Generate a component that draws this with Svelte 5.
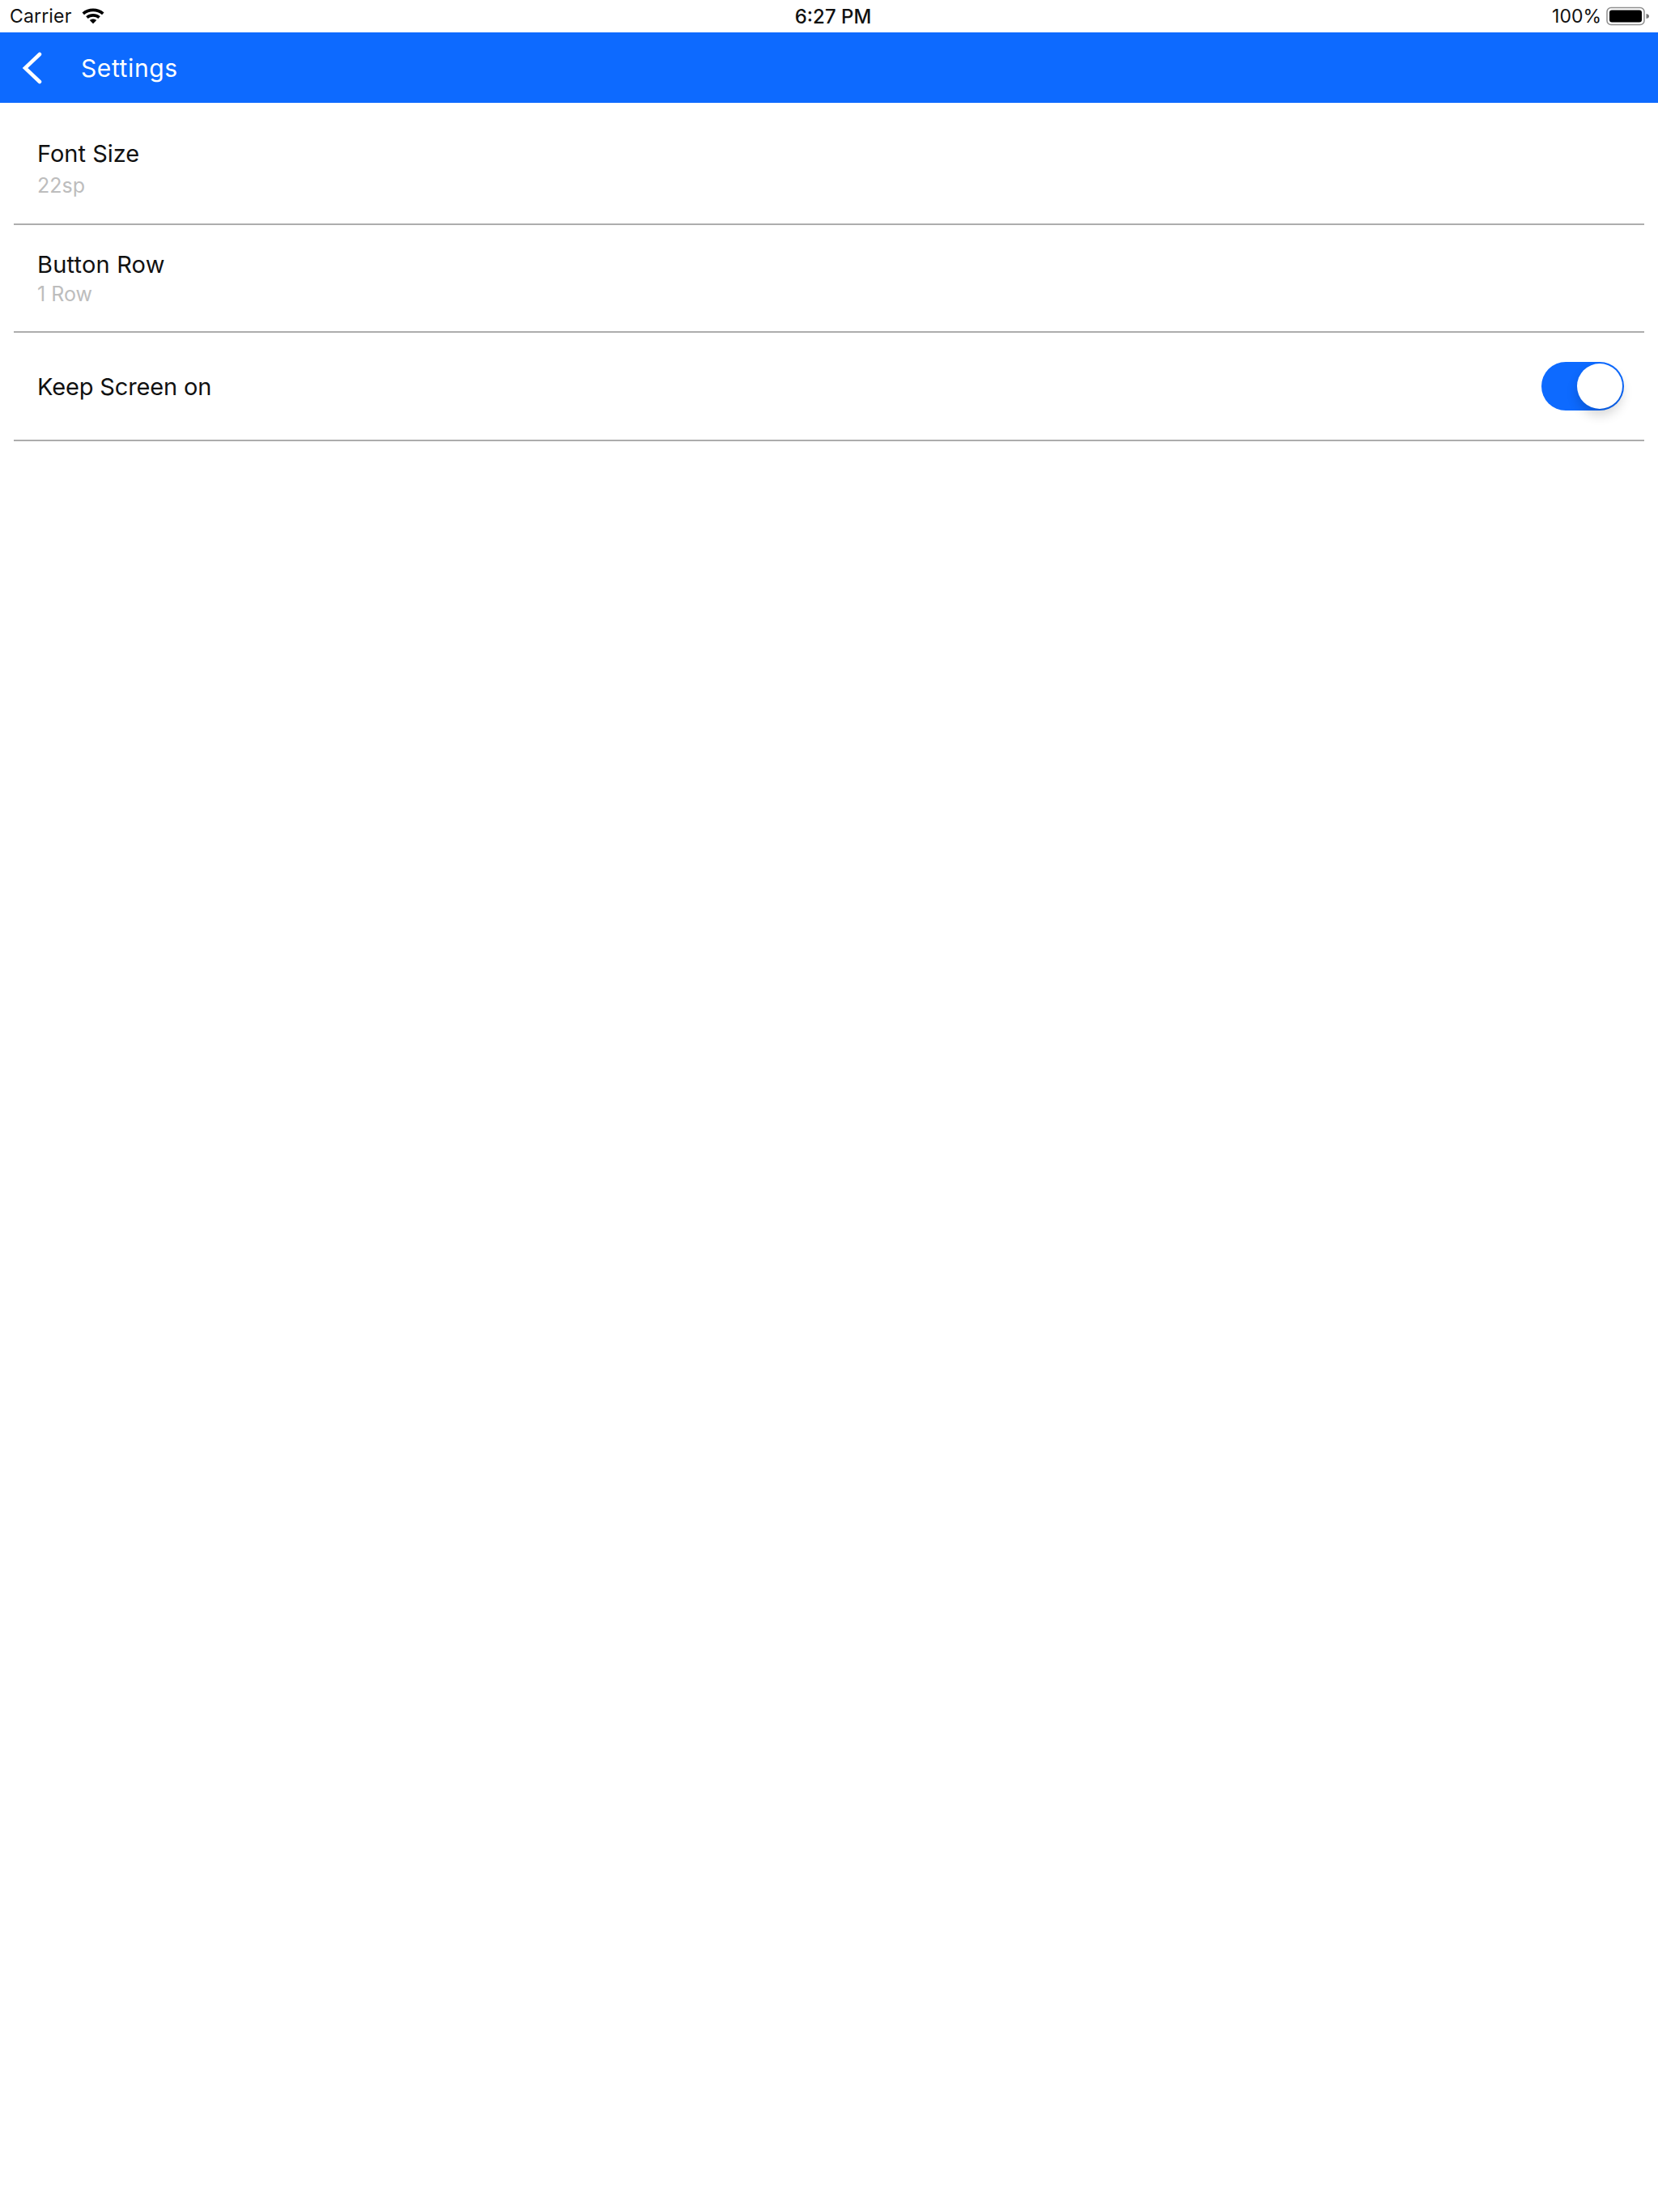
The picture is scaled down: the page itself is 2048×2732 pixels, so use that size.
<script>
  const rows = [
    { title: 'Font Size', sub: '22sp', cls: 'a' },
    { title: 'Button Row', sub: '1 Row', cls: 'b' },
    { title: 'Keep Screen on', toggle: true, cls: 'c' }
  ];
</script>

<div class="page">
  <div class="status">
    <div class="left">
      <span class="carrier">Carrier</span>
      <svg class="wifi" width="30" height="22" viewBox="0 0 30 22">
        <path d="M1.5 7.5C8.5 .8 21.500 .8 28.500 7.500L26 10.200C20.200 4.800 9.800 4.800 4 10.200Z" fill="#000"/>
        <path d="M6.200 12.300C11 7.900 19 7.900 23.800 12.300L21.300 15C17.800 11.900 12.200 11.900 8.700 15Z" fill="#000"/>
        <path d="M10.800 16.900C13.200 14.900 16.800 14.900 19.200 16.900L15 21.300Z" fill="#000"/>
      </svg>
    </div>
    <div class="time">6:27 PM</div>
    <div class="right">
      <span>100%</span>
      <svg width="54" height="24" viewBox="0 0 54 24">
        <rect x="1" y="1.500" width="46" height="21" rx="5" fill="none" stroke="#8e8e8e" stroke-width="1.500"/>
        <rect x="4" y="4.500" width="40" height="15" rx="3" fill="#000"/>
        <path d="M49.500 9C52 9.500 53 10.500 53 12C53 13.500 52 14.500 49.500 15Z" fill="#777"/>
      </svg>
    </div>
  </div>

  <header class="bar">
    <svg class="back" width="26" height="40" viewBox="0 0 26 40">
      <path d="M23 3L5 20L23 37" fill="none" stroke="#fff" stroke-width="4.500" stroke-linecap="round" stroke-linejoin="miter"/>
    </svg>
    <span class="heading">Settings</span>
  </header>

  <div class="list">
    {#each rows as row}
      <div class="row {row.cls}">
        <div class="labels">
          <div class="title">{row.title}</div>
          {#if row.sub}<div class="sub">{row.sub}</div>{/if}
        </div>
        {#if row.toggle}
          <div class="toggle"><div class="knob"></div></div>
        {/if}
      </div>
    {/each}
  </div>
</div>

<style>
  :global(body) { margin: 0; background: #fff; }
  .page {
    width: 2048px;
    height: 2732px;
    background: #fff;
    font-family: Inter, "Liberation Sans", sans-serif;
    color: #000;
    overflow: hidden;
  }
  .status {
    height: 40px;
    display: grid;
    grid-template-columns: 1fr auto 1fr;
    align-items: center;
    padding: 0 10px 0 12px;
    font-size: 23px;
    color: #111;
  }
  .left { display: flex; align-items: center; gap: 12px; }
  .carrier { letter-spacing: 0.15px; }
  .wifi { margin-top: -2px; }
  .time { font-size: 24px; font-weight: 500; margin-left: 8px; }
  .right { display: flex; justify-content: flex-end; align-items: center; gap: 6px; }
  .bar {
    height: 87px;
    background: #0d6aff;
    display: flex;
    align-items: center;
    padding-left: 26px;
    color: #fff;
  }
  .back { flex: none; }
  .heading { font-size: 30px; letter-spacing: 0.6px; margin-left: 48px; font-weight: 400; }
  .list { padding: 0 17px; }
  .row {
    display: flex;
    align-items: center;
    justify-content: space-between;
    border-bottom: 2px solid #adadad;
    padding: 0 25px 0 29px;
    box-sizing: border-box;
  }
  .a { height: 151px; padding-top: 13px; }
  .b { height: 133px; }
  .c { height: 134px; padding-top: 2px; }
  .title { font-size: 29px; line-height: 36px; color: #111; }
  .sub { font-size: 25px; line-height: 30px; color: #bdbdbd; }
  .a .sub { margin-top: 6px; }
  .b .title { letter-spacing: 0.2px; }
  .b .sub { margin-top: 3px; }
  .c .title { letter-spacing: -0.15px; }
  .toggle {
    width: 102px;
    height: 60px;
    margin-top: -3px;
    border-radius: 30px;
    background: #0d6aff;
    display: flex;
    justify-content: flex-end;
    align-items: center;
    padding: 2px;
    box-sizing: border-box;
  }
  .knob {
    width: 56px;
    height: 56px;
    border-radius: 50%;
    background: #fff;
    box-shadow: 0 8px 14px rgba(0, 0, 0, 0.16);
  }
</style>
